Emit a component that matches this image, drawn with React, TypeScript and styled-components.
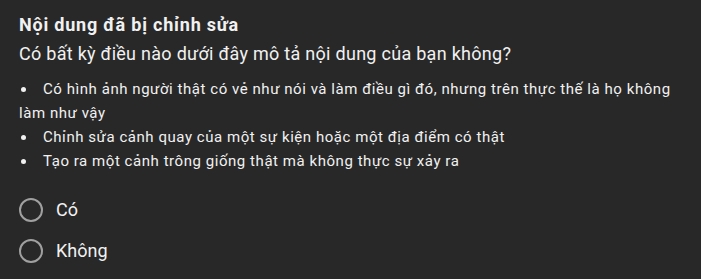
import styled, { createGlobalStyle } from "styled-components";

const GlobalStyle = createGlobalStyle`
  html, body {
    margin: 0;
    padding: 0;
    background: #282828;
  }
  body {
    font-family: Roboto, "Noto Sans", Arial, sans-serif;
    color: #f1f1f1;
  }
`

const Panel = styled.div`
  width: 701px;
  height: 279px;
  box-sizing: border-box;
  padding: 14px 19px 0 19px;
  background: #282828;
  display: flex;
  flex-direction: column;
`

const Title = styled.h2`
  margin: 0;
  font-size: 18px;
  line-height: 22px;
  font-weight: 700;
  letter-spacing: 0.8px;
`

const Question = styled.p`
  margin: 5px 0 0 0;
  font-size: 18px;
  line-height: 26px;
  font-weight: 400;
  letter-spacing: 0.28px;
`

const List = styled.ul`
  margin: 10px 0 0 0;
  padding: 0;
  list-style: none;
`

const Item = styled.li`
  font-size: 15px;
  line-height: 24px;
  letter-spacing: 0.55px;
  &::before {
    content: "";
    display: inline-block;
    width: 5px;
    height: 5px;
    border-radius: 50%;
    background: #f1f1f1;
    margin: 0 17px 2px 2px;
    vertical-align: middle;
  }
`

const Options = styled.div`
  margin-top: 25px;
  display: flex;
  flex-direction: column;
  gap: 17px;
`

const Option = styled.label`
  display: flex;
  align-items: center;
  gap: 13px;
  font-size: 18px;
  line-height: 24px;
  cursor: pointer;
`

const Circle = styled.span`
  width: 24px;
  height: 24px;
  box-sizing: border-box;
  border: 2px solid #a0a0a0;
  border-radius: 50%;
  flex-shrink: 0;
`

const items = [
  "Có hình ảnh người thật có vẻ như nói và làm điều gì đó, nhưng trên thực thế là họ không làm như vậy",
  "Chỉnh sửa cảnh quay của một sự kiện hoặc một địa điểm có thật",
  "Tạo ra một cảnh trông giống thật mà không thực sự xảy ra",
]

export default function App() {
  return (
    <>
      <GlobalStyle />
      <Panel>
        <Title>Nội dung đã bị chỉnh sửa</Title>
        <Question>Có bất kỳ điều nào dưới đây mô tả nội dung của bạn không?</Question>
        <List>
          {items.map((t) => (
            <Item key={t}>{t}</Item>
          ))}
        </List>
        <Options>
          <Option>
            <Circle />
            Có
          </Option>
          <Option>
            <Circle />
            Không
          </Option>
        </Options>
      </Panel>
    </>
  )
}
